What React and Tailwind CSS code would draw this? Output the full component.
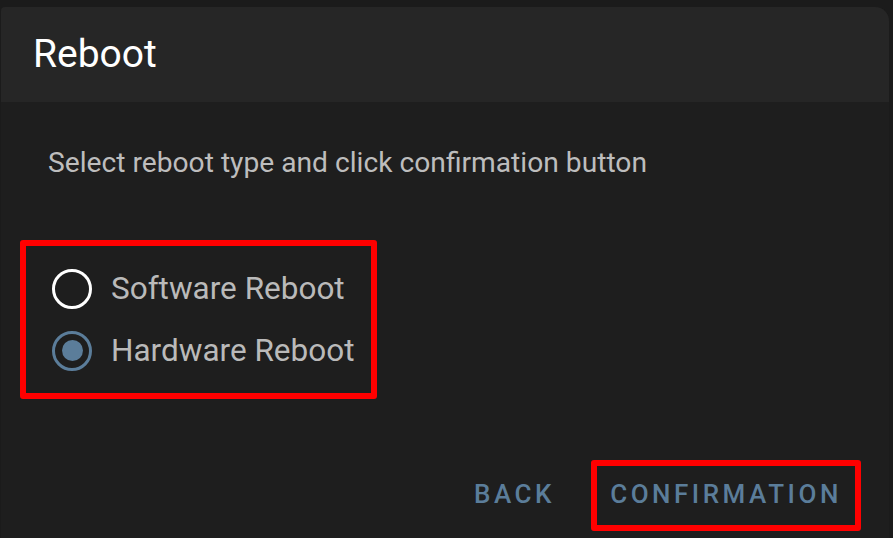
import React, { useState } from "react";

function Radio({ checked, label, onClick }) {
    return (
        <button onClick={onClick} className="flex items-center h-[62px] text-left">
            <span
                className={`w-[40px] h-[40px] rounded-full flex items-center justify-center border-[3.5px] ${checked ? "border-[#5b7d9a]" : "border-white"}`}
            >
                {checked && <span className="w-[21px] h-[21px] rounded-full bg-[#5b7d9a]" />}
            </span>
            <span className="ml-[19px] text-[31.5px] text-[#bababa] leading-none">{label}</span>
        </button>
    );
}

export default function App() {
    const [type, setType] = useState("hardware");

    return (
        <div
            className="w-[893px] h-[538px] bg-[#1b1b1b] overflow-hidden pt-[7px] pl-[1px] pr-[4px]"
            style={{ fontFamily: "Roboto, 'Noto Sans', sans-serif" }}
        >
            <div className="h-full bg-[#1e1e1e] rounded-tr-[14px] rounded-tl-[4px] overflow-hidden flex flex-col">
                {/* HEADER */}
                <div className="h-[95px] bg-[#262626] flex items-center pl-[32px]">
                    <h1 className="text-[39px] text-white leading-none">Reboot</h1>
                </div>

                {/* BODY */}
                <p className="mt-[47px] ml-[47px] text-[28.2px] text-[#bdbdbd] leading-none">
                    Select reboot type and click confirmation button
                </p>

                <div className="mt-[63px] ml-[19px] w-[357px] h-[159px] border-[6px] border-[#ff0000] rounded-[3px] flex flex-col justify-center pl-[26px]">
                    <Radio checked={type === "software"} label="Software Reboot" onClick={() => setType("software")} />
                    <Radio checked={type === "hardware"} label="Hardware Reboot" onClick={() => setType("hardware")} />
                </div>

                {/* ACTIONS */}
                <div className="mt-auto mb-[7px] flex items-center justify-end pr-[28px] gap-[36px]">
                    <button className="text-[26px] font-medium tracking-[0.135em] text-[#5b7d9a] leading-none pb-[4px]">BACK</button>
                    <div className="w-[270px] h-[71px] border-[6px] border-[#ff0000] rounded-[3px] flex items-center justify-center pb-[4px]">
                        <button className="text-[26px] font-medium tracking-[0.135em] text-[#5b7d9a] leading-none">CONFIRMATION</button>
                    </div>
                </div>
            </div>
        </div>
    );
}
